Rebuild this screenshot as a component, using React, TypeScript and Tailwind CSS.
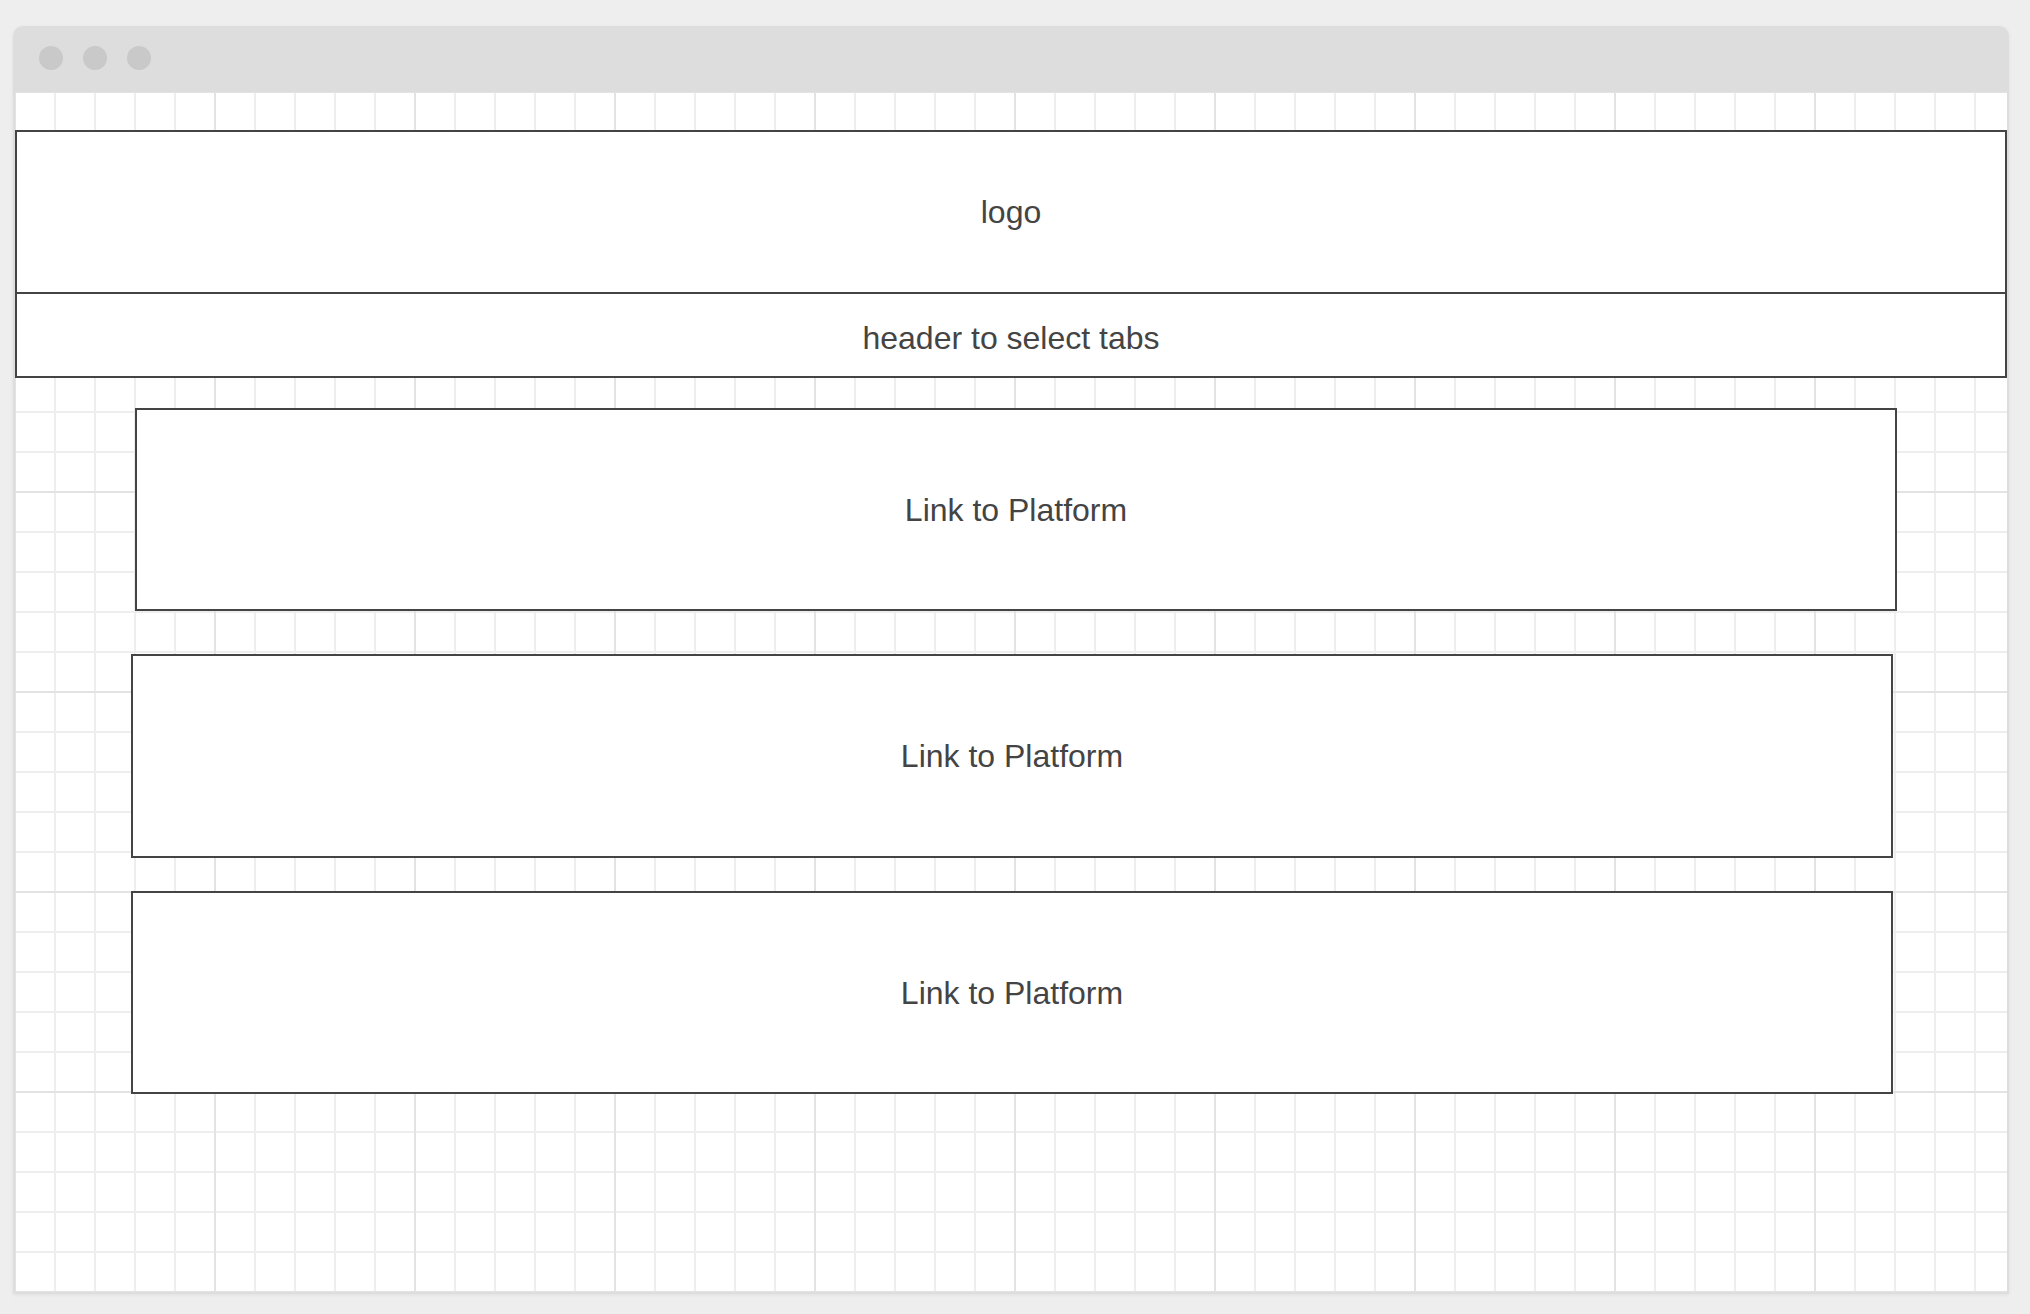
const linkBoxes = [
  { key: "a", cls: "mt-[30px] ml-[120px] h-[203px]" },
  { key: "b", cls: "mt-[43px] ml-[116px] h-[204px]" },
  { key: "c", cls: "mt-[33px] ml-[116px] h-[203px]" },
];

function Dot() {
  return <span className="block h-[24px] w-[24px] rounded-full bg-[#c9c9c9]" />;
}

export default function App() {
  return (
    <div
      className="min-h-screen w-full bg-[#eeeeee] pt-[26px] pl-[13px] pb-[20px] text-[#444444]"
      style={{ fontFamily: '"Liberation Sans", Arial, sans-serif' }}
    >
      {/* browser window */}
      <div className="w-[1996px] rounded-t-[10px] bg-[#dddddd] px-[2px] pb-[2px] shadow-[0_1px_4px_rgba(0,0,0,0.06)]">
        <div className="flex h-[66px] items-start gap-[20px] pt-[20px] pl-[24px]">
          <Dot />
          <Dot />
          <Dot />
        </div>

        {/* canvas with grid paper */}
        <div className="h-[1200px] w-[1992px] overflow-hidden bg-white bg-[image:linear-gradient(to_right,#e3e3e3_2px,transparent_2px),linear-gradient(to_bottom,#e3e3e3_2px,transparent_2px),linear-gradient(to_right,#eeeeee_2px,transparent_2px),linear-gradient(to_bottom,#eeeeee_2px,transparent_2px)] bg-[size:200px_200px,200px_200px,40px_40px,40px_40px] bg-[position:-1px_-1px]">
          <div className="pt-[38px]">
            <div className="w-[1992px] border-2 border-[#444444] bg-white">
              <div className="flex h-[160px] items-center justify-center text-[32px]">logo</div>
              <div className="flex h-[84px] items-center justify-center border-t-2 border-[#444444] pt-[5px] text-[32px]">
                header to select tabs
              </div>
            </div>
          </div>

          {linkBoxes.map((b) => (
            <div
              key={b.key}
              className={`${b.cls} flex w-[1762px] items-center justify-center border-2 border-[#444444] bg-white text-[32px]`}
            >
              Link to Platform
            </div>
          ))}
        </div>
      </div>
    </div>
  );
}
